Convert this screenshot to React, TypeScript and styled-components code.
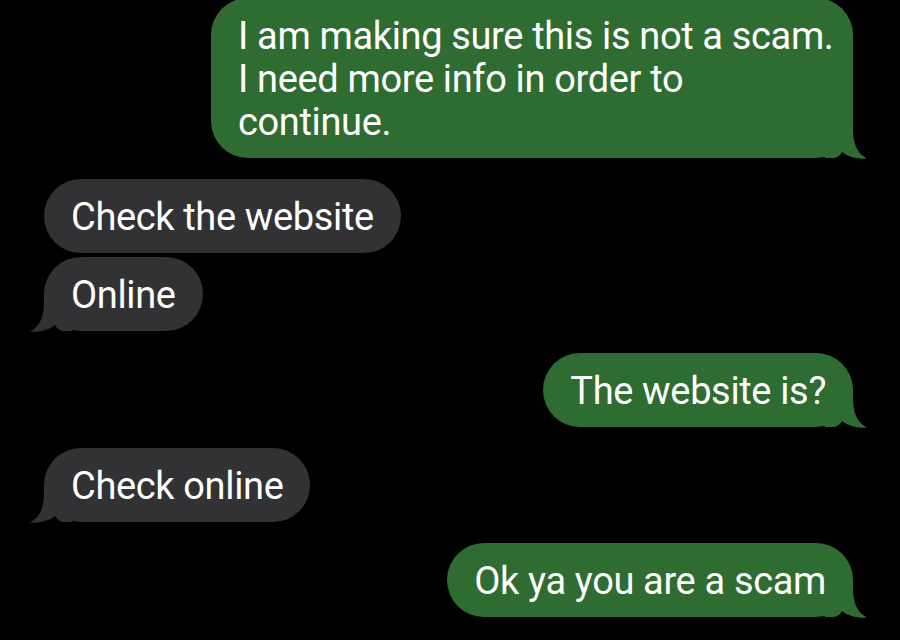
import React from "react";
import styled, { createGlobalStyle } from "styled-components";

const GlobalStyle = createGlobalStyle`
  html, body {
    margin: 0;
    padding: 0;
    background: #000;
  }
  body {
    width: 900px;
    height: 640px;
    overflow: hidden;
    font-family: Roboto, "Noto Sans", "Liberation Sans", sans-serif;
  }
`;

type Side = "in" | "out";

const COLORS: Record<Side, string> = {
  out: "#2f6c32",
  in: "#323234",
};

const Screen = styled.div`
  width: 900px;
  height: 640px;
  background: #000;
  overflow: hidden;
`;

const Thread = styled.div`
  display: flex;
  flex-direction: column;
  margin-top: -2px;
  padding: 0 47px 0 44px;
`;

const Row = styled.div<{ $side: Side; $gap: number }>`
  display: flex;
  justify-content: ${(p) => (p.$side === "out" ? "flex-end" : "flex-start")};
  margin-top: ${(p) => p.$gap}px;
`;

const Bubble = styled.div<{ $side: Side }>`
  position: relative;
  box-sizing: border-box;
  max-width: 642px;
  padding: 17px 27px 14px 27px;
  border-radius: 37px;
  background: ${(p) => COLORS[p.$side]};
  color: #fff;
  font-size: 38px;
  line-height: 43px;
  letter-spacing: -0.35px;
  white-space: nowrap;
`;

const TailSvg = styled.svg<{ $side: Side }>`
  position: absolute;
  bottom: -1px;
  width: 42px;
  height: 39px;
  ${(p) =>
    p.$side === "out"
      ? "right: -14px;"
      : "left: -14px; transform: scaleX(-1);"}
`;

function Tail({ side }: { side: Side }) {
  return (
    <TailSvg $side={side} viewBox="0 0 42 39" aria-hidden="true">
      <path
        d="M0 0 L28 0 L28 12 C29 28 34 34 42 38.6 C33 39.4 23 37 17 32 C15 35.5 12 38 8 38 L0 38 Z"
        fill={COLORS[side]}
      />
    </TailSvg>
  );
}

type Msg = { side: Side; gap: number; tail: boolean; lines: string[] };

const messages: Msg[] = [
  {
    side: "out",
    gap: 0,
    tail: true,
    lines: [
      "I am making sure this is not a scam.",
      "I need more info in order to",
      "continue.",
    ],
  },
  { side: "in", gap: 21, tail: false, lines: ["Check the website"] },
  { side: "in", gap: 4, tail: true, lines: ["Online"] },
  { side: "out", gap: 22, tail: true, lines: ["The website is?"] },
  { side: "in", gap: 21, tail: true, lines: ["Check online"] },
  { side: "out", gap: 21, tail: true, lines: ["Ok ya you are a scam"] },
];

export default function App() {
  return (
    <Screen>
      <GlobalStyle />
      <Thread>
        {messages.map((m, i) => (
          <Row key={i} $side={m.side} $gap={m.gap}>
            <Bubble $side={m.side}>
              {m.lines.map((l, j) => (
                <React.Fragment key={j}>
                  {j > 0 && <br />}
                  {l}
                </React.Fragment>
              ))}
              {m.tail && <Tail side={m.side} />}
            </Bubble>
          </Row>
        ))}
      </Thread>
    </Screen>
  );
}
